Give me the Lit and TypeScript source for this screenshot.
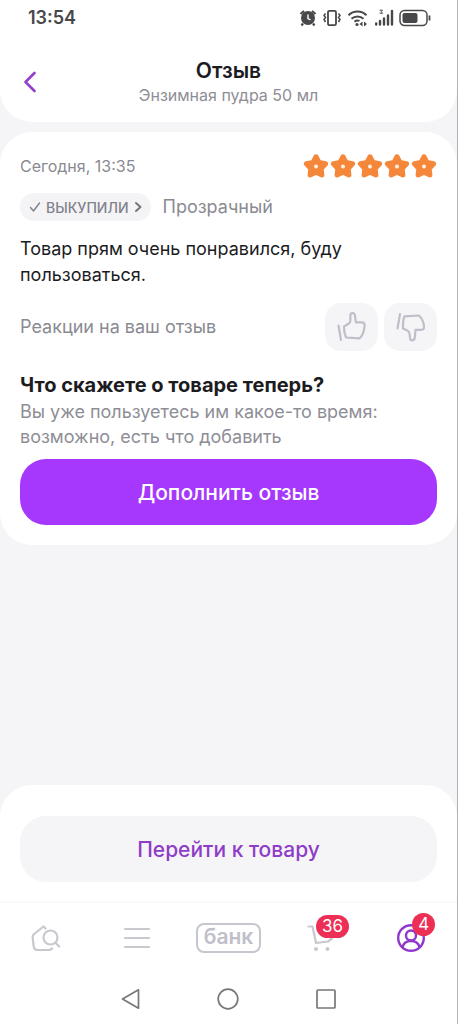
import { LitElement, html, css, svg } from "lit";
import { customElement } from "lit/decorators.js";

const star = svg`<svg class="star" viewBox="0 0 26 26" aria-hidden="true">
  <path d="M13 3.800 16 9.400 22.600 10.700 18.200 15.500 18.900 22 13 19.300 7.100 22 7.800 15.500 3.400 10.700 10 9.400Z" fill="#f5873a" stroke="#f5873a" stroke-width="5" stroke-linejoin="round"/>
  <circle cx="13" cy="13.500" r="2" fill="#fff0e2"/>
</svg>`;

@customElement("app-root")
export class AppRoot extends LitElement {
  static styles = css`
    :host {
      display: flex;
      flex-direction: column;
      min-height: 100vh;
      box-sizing: border-box;
      border-right: 1px solid #b4b4b8;
      background: #f5f5f8;
      color: #1c1c1f;
      font-family: Inter, "Noto Sans", sans-serif;
    }
    *, *::before, *::after { box-sizing: border-box; }
    h1, h2, p { margin: 0; font-weight: 400; }
    svg { display: block; fill: none; }
    button {
      border: 0;
      padding: 0;
      margin: 0;
      background: none;
      font-family: inherit;
      color: inherit;
      cursor: pointer;
    }
    a { color: inherit; text-decoration: none; }

    .top {
      background: #fff;
      border-radius: 0 0 32px 32px;
      padding-bottom: 16px;
    }
    .status {
      display: flex;
      align-items: center;
      justify-content: space-between;
      height: 36px;
      padding: 0 26px 0 28px;
      color: #48484a;
      font: 600 18px/20px Inter, sans-serif;
    }
    .status-icons { display: flex; align-items: center; gap: 5px; }
    .bar {
      display: grid;
      grid-template-columns: 60px 1fr 60px;
      align-items: center;
      padding-top: 22px;
    }
    .back { display: flex; justify-content: center; padding: 8px; }
    .titles { text-align: center; }
    .title { font-size: 21px; line-height: 26px; font-weight: 600; }
    .subtitle { font-size: 16px; line-height: 22px; color: #8e8e96; }

    .card {
      margin-top: 10px;
      padding: 20px;
      border-radius: 32px;
      background: #fff;
    }
    .row { display: flex; align-items: center; justify-content: space-between; }
    .date { font-size: 16px; line-height: 28px; color: #8a8a92; }
    .stars { display: flex; gap: 1px; }
    .star { width: 26px; height: 26px; }
    .meta { display: flex; align-items: center; gap: 12px; margin-top: 13px; }
    .chip {
      display: flex;
      align-items: center;
      gap: 4px;
      height: 28px;
      padding: 0 8px;
      border-radius: 14px;
      background: #f4f4f7;
      color: #82828b;
      font-size: 14px;
      font-weight: 500;
    }
    .variant { font-size: 18px; line-height: 26px; color: #8a8a92; }
    .text { margin-top: 15px; font-size: 18px; line-height: 26px; }
    .reactions { margin-top: 15px; }
    .reactions-label { font-size: 18px; line-height: 28px; color: #8a8a92; }
    .votes { display: flex; gap: 6px; }
    .vote {
      display: grid;
      place-items: center;
      width: 53px;
      height: 48px;
      border-radius: 16px;
      background: #f5f5f8;
    }
    .question { margin-top: 20px; font-size: 20px; line-height: 28px; font-weight: 700; }
    .hint { font-size: 18px; line-height: 25px; color: #8e8e96; }
    .action {
      display: flex;
      align-items: center;
      justify-content: center;
      width: 100%;
      height: 66px;
      border-radius: 26px;
      font-size: 21px;
      font-weight: 500;
    }
    .primary { margin-top: 10px; background: #a638fe; color: #fff; }
    .secondary { background: #f5f5f8; color: #8f3cc9; }

    .bottom {
      margin-top: auto;
      border-radius: 32px 32px 0 0;
      background: #fff;
    }
    .sheet { padding: 31px 20px 19px; }
    .tabs {
      display: grid;
      grid-template-columns: repeat(5, 1fr);
      height: 72px;
      border-top: 2px solid #f9f9fa;
    }
    .tab { display: grid; place-items: center; }
    .tab-icon { position: relative; }
    .badge {
      position: absolute;
      left: 9px;
      top: -10px;
      min-width: 23px;
      padding: 0 6px;
      border-radius: 12px;
      background: #ed2f55;
      color: #fff;
      text-align: center;
      font: 400 17px/23px Inter, sans-serif;
    }
    .badge.single { left: 16px; }
    .bank {
      display: block;
      padding: 0 6px 2px;
      border: 2px solid #c6c6ce;
      border-radius: 8px;
      color: #c0c0c9;
      font-size: 21px;
      line-height: 24px;
      font-weight: 600;
    }
    .system {
      display: flex;
      justify-content: center;
      align-items: center;
      gap: 74px;
      height: 51px;
    }
  `;

  render() {
    return html`
      <header class="top">
        <div class="status">
          <span>13:54</span>
          <span class="status-icons">
            <svg width="18" height="18" viewBox="0 0 18 18"><circle cx="9" cy="9" r="7" fill="#48484a"/><path d="M1.500 5 5 2M16.500 5 13 2M4 14.500 2.500 16.500M14 14.500 15.500 16.500" stroke="#48484a" stroke-width="2.200"/><path d="M9 5.500V9.500L11.500 11" stroke="#fff" stroke-width="1.400"/></svg>
            <svg width="20" height="18" viewBox="0 0 20 18" stroke="#48484a" stroke-width="1.500"><rect x="6" y="1.800" width="8" height="14.400" rx="1.500" stroke-width="1.800"/><path d="m3.500 4.500-1.500 2 1.500 2-1.500 2 1.500 2.500M16.500 4.500l1.500 2-1.500 2 1.500 2-1.500 2.500"/></svg>
            <svg width="22" height="18" viewBox="0 0 22 18" stroke="#48484a" stroke-width="2"><path d="M1.500 6.200a13 13 0 0 1 18 0M4.500 9.700a9 9 0 0 1 12 0M7.500 12.700a5 5 0 0 1 5 -.8"/><circle cx="10" cy="15.500" r="1.600" fill="#48484a" stroke="none"/><path d="m15.500 12.500-3 2.500 3 2.500zM17 12.500l3 2.500-3 2.500z" fill="#48484a" stroke="none"/></svg>
            <svg width="20" height="18" viewBox="0 0 20 18" stroke="#48484a" stroke-width="2.400" stroke-linecap="round"><path d="M2.200 14.500v1M6 12v3.500M10 9.500v6M14 6.500v9M18 2v13.500"/><path d="M6 1.200h2.500L7.200 2.700 8.500 4.200H6" stroke-width="1"/></svg>
            <svg width="32" height="18" viewBox="0 0 32 18"><rect x="1" y="1.500" width="27" height="15" rx="4.500" stroke="#48484a" stroke-width="1.500"/><rect x="3.500" y="4" width="15" height="10" rx="2" fill="#48484a"/><path d="M30.500 6.500v5" stroke="#48484a" stroke-width="1.800"/></svg>
          </span>
        </div>
        <div class="bar">
          <button class="back" aria-label="Назад">
            <svg width="14" height="22" viewBox="0 0 14 22"><path d="M11.500 2 2.500 11l9 9" stroke="#9440cc" stroke-width="2.600" stroke-linecap="round" stroke-linejoin="round"/></svg>
          </button>
          <div class="titles">
            <h1 class="title">Отзыв</h1>
            <p class="subtitle">Энзимная пудра 50 мл</p>
          </div>
        </div>
      </header>

      <main class="card">
        <div class="row">
          <span class="date">Сегодня, 13:35</span>
          <span class="stars" role="img" aria-label="5 из 5">${[1, 2, 3, 4, 5].map(() => star)}</span>
        </div>
        <div class="meta">
          <button class="chip">
            <svg width="14" height="12" viewBox="0 0 14 12"><path d="m2.500 6.500 3 3.500 6-8" stroke="#82828b" stroke-width="1.400" stroke-linecap="round" stroke-linejoin="round"/></svg>
            ВЫКУПИЛИ
            <svg width="10" height="12" viewBox="0 0 10 12"><path d="m3 2 4.500 4L3 10" stroke="#76767e" stroke-width="2" stroke-linecap="round" stroke-linejoin="round"/></svg>
          </button>
          <span class="variant">Прозрачный</span>
        </div>
        <p class="text">Товар прям очень понравился, буду пользоваться.</p>
        <div class="row reactions">
          <span class="reactions-label">Реакции на ваш отзыв</span>
          <span class="votes">
            <button class="vote" aria-label="Нравится">
              <svg width="30" height="32" viewBox="0 0 30 32" stroke="#bfbfc9" stroke-width="2.200" stroke-linecap="round" stroke-linejoin="round"><path d="M1.500 14.500 4 29"/><path d="M7 15.500 11.500 12.800c1.300-.9 1.900-2 1.900-3.600V4.300c0-3 4-3 4.500 0l1 7h5.700c2.400 0 3.200 1.400 3 3.500-.4 5-1.900 9.500-4.900 12.500L9 26.500C7.500 23.300 7 19.500 7 15.500Z"/></svg>
            </button>
            <button class="vote" aria-label="Не нравится">
              <svg width="30" height="32" viewBox="0 0 30 32" stroke="#bfbfc9" stroke-width="2.200" stroke-linecap="round" stroke-linejoin="round"><path d="M4 3 1.500 17.500"/><path d="M8.300 5.300 23 4.500c3.200 3 5 7.500 5 12 0 1.600-1.200 2.300-3 2.300h-5.500l-.7 7.700c-.5 3.800-4.500 3.800-4.800.3l-.4-3.800c-.2-1.700-.9-2.700-2.300-3.400L7 17.500c-.4-4.200 0-8.500 1.300-12.200Z"/></svg>
            </button>
          </span>
        </div>
        <h2 class="question">Что скажете о товаре теперь?</h2>
        <p class="hint">Вы уже пользуетесь им какое-то время: возможно, есть что добавить</p>
        <button class="action primary">Дополнить отзыв</button>
      </main>

      <footer class="bottom">
        <div class="sheet"><a class="action secondary" href="#product">Перейти к товару</a></div>
        <nav class="tabs">
          <a class="tab" href="#home" aria-label="Главная">
            <svg width="30" height="28" viewBox="0 0 30 28" stroke="#c8c8cf" stroke-width="2.200" stroke-linecap="round" stroke-linejoin="round"><path d="M14.500 4.500 12.500 2.500 2.500 10.500c-.8 1-1 2-.8 3.500l1 8.500c.4 2.500 1.800 3.500 4 3.500h10.500c1.800 0 3-.3 4-1.500"/><circle cx="19.500" cy="13.500" r="7"/><path d="m24.800 19 3.400 3.500"/></svg>
          </a>
          <a class="tab" href="#catalog" aria-label="Каталог">
            <svg width="28" height="24" viewBox="0 0 28 24" stroke="#c8c8cf" stroke-width="2.200" stroke-linecap="round"><path d="M2 3h24M2 12h24M2 21h24"/></svg>
          </a>
          <a class="tab" href="#bank"><span class="bank">банк</span></a>
          <a class="tab" href="#cart">
            <span class="tab-icon">
              <svg width="26" height="26" viewBox="0 0 26 26" stroke="#c8c8cf" stroke-width="2.200" stroke-linecap="round" stroke-linejoin="round"><path d="M1.500 1.500h4L9 18l12-1.500 4-3"/><circle cx="9" cy="24" r="2" fill="#c8c8cf" stroke="none"/><circle cx="20.500" cy="24" r="2" fill="#c8c8cf" stroke="none"/></svg>
              <span class="badge">36</span>
            </span>
          </a>
          <a class="tab" href="#profile">
            <span class="tab-icon">
              <svg width="30" height="30" viewBox="0 0 30 30" stroke="#9038cc" stroke-width="2.400"><circle cx="15" cy="15" r="12.800"/><circle cx="15" cy="12.500" r="5"/><path d="M6.500 24.200c1-3.800 4.200-6.200 8.500-6.200s7.500 2.400 8.500 6.200"/></svg>
              <span class="badge single">4</span>
            </span>
          </a>
        </nav>
        <div class="system">
          <button aria-label="Назад"><svg width="22" height="24" viewBox="0 0 22 24"><path d="M18.500 2.800v18.400L2.500 12Z" stroke="#77777a" stroke-width="1.700" stroke-linejoin="round"/></svg></button>
          <button aria-label="Домой"><svg width="24" height="24" viewBox="0 0 24 24"><circle cx="12" cy="12" r="9.800" stroke="#77777a" stroke-width="1.700"/></svg></button>
          <button aria-label="Недавние"><svg width="24" height="24" viewBox="0 0 24 24"><rect x="3" y="3" width="18" height="18" rx="1" stroke="#77777a" stroke-width="1.700"/></svg></button>
        </div>
      </footer>
    `;
  }
}
